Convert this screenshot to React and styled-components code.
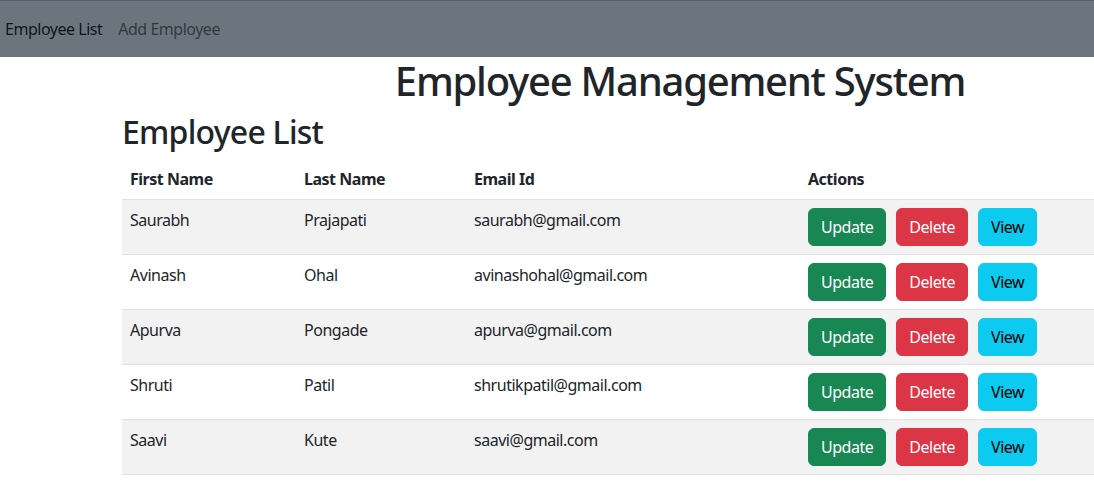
import React from 'react';
import styled, { createGlobalStyle } from 'styled-components';

const GlobalStyle = createGlobalStyle`
  html, body {
    margin: 0;
    padding: 0;
    overflow: hidden;
    background: #fff;
  }
  body {
    font-family: "Noto Sans", "Liberation Sans", sans-serif;
    font-size: 16px;
    line-height: 1.5;
    letter-spacing: -0.03em;
    color: #212529;
  }
`;

const Page = styled.div`
  width: 1360px;
`;

const NavBar = styled.nav`
  display: flex;
  align-items: center;
  gap: 16px;
  height: 56px;
  padding-left: 5px;
  background: #6c757d;
  border-top: 1px solid #575e65;
`;

const NavLink = styled.a`
  font-size: 16px;
  line-height: 24px;
  text-decoration: none;
  color: ${p => (p.$active ? 'rgba(0, 0, 0, 0.85)' : 'rgba(0, 0, 0, 0.55)')};
  cursor: pointer;
`;

const Container = styled.div`
  max-width: 1116px;
  margin: 0 auto;
  padding: 0 12px;
`;

const Title = styled.h1`
  margin: 0 0 8px;
  font-size: 40px;
  font-weight: 500;
  line-height: 1.2;
  letter-spacing: -0.031em;
  text-align: center;
`;

const SubTitle = styled.h2`
  margin: 0 0 8px;
  font-size: 32px;
  font-weight: 500;
  line-height: 1.2;
  letter-spacing: -0.024em;
`;

const Table = styled.table`
  width: 100%;
  table-layout: fixed;
  border-collapse: collapse;
  text-align: left;
`;

const HeadCell = styled.th`
  box-sizing: border-box;
  padding: 8px;
  font-weight: 700;
  border-bottom: 1px solid #dee2e6;
  width: ${p => p.$w || 'auto'};
`;

const Row = styled.tr`
  background: ${p => (p.$striped ? '#f2f2f2' : '#fff')};
`;

const Cell = styled.td`
  padding: 8px;
  vertical-align: top;
  border-bottom: 1px solid #dee2e6;
`;

const Actions = styled.div`
  display: flex;
  gap: 10px;
`;

const colors = {
  success: { bg: '#198754', fg: '#fff' },
  danger: { bg: '#dc3545', fg: '#fff' },
  info: { bg: '#0dcaf0', fg: '#000' },
};

const Button = styled.button`
  font-family: inherit;
  font-size: 16px;
  line-height: 24px;
  letter-spacing: inherit;
  padding: 6px 12px;
  border: 1px solid ${p => colors[p.$variant].bg};
  border-radius: 6px;
  background: ${p => colors[p.$variant].bg};
  color: ${p => colors[p.$variant].fg};
  cursor: pointer;
`;

const employees = [
  { id: 1, firstName: 'Saurabh', lastName: 'Prajapati', email: 'saurabh@gmail.com' },
  { id: 2, firstName: 'Avinash', lastName: 'Ohal', email: 'avinashohal@gmail.com' },
  { id: 3, firstName: 'Apurva', lastName: 'Pongade', email: 'apurva@gmail.com' },
  { id: 4, firstName: 'Shruti', lastName: 'Patil', email: 'shrutikpatil@gmail.com' },
  { id: 5, firstName: 'Saavi', lastName: 'Kute', email: 'saavi@gmail.com' },
];

export default function App() {
  return (
    <Page>
      <GlobalStyle />
      <NavBar>
        <NavLink $active>Employee List</NavLink>
        <NavLink>Add Employee</NavLink>
      </NavBar>
      <Container>
        <Title>Employee Management System</Title>
        <SubTitle>Employee List</SubTitle>
        <Table>
          <thead>
            <tr>
              <HeadCell $w="174px">First Name</HeadCell>
              <HeadCell $w="170px">Last Name</HeadCell>
              <HeadCell $w="334px">Email Id</HeadCell>
              <HeadCell>Actions</HeadCell>
            </tr>
          </thead>
          <tbody>
            {employees.map((emp, i) => (
              <Row key={emp.id} $striped={i % 2 === 0}>
                <Cell>{emp.firstName}</Cell>
                <Cell>{emp.lastName}</Cell>
                <Cell>{emp.email}</Cell>
                <Cell>
                  <Actions>
                    <Button $variant="success">Update</Button>
                    <Button $variant="danger">Delete</Button>
                    <Button $variant="info">View</Button>
                  </Actions>
                </Cell>
              </Row>
            ))}
          </tbody>
        </Table>
      </Container>
    </Page>
  );
}
